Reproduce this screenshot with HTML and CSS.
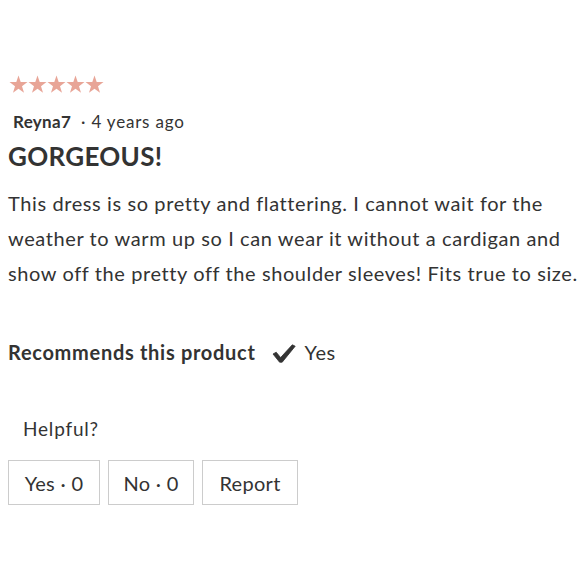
FILE: index.html
```html
<!DOCTYPE html>
<html>
<head>
<meta charset="utf-8">
<link rel="stylesheet" href="styles.css">
</head>
<body>
<div class="review">
  <div class="stars">
    <svg width="95" height="19" viewBox="0 0 95 19">
      <g fill="#e8a597">
        <path id="s" d="M9.5 0.5 L11.7 7 L18.5 7.1 L13 11.2 L15 17.8 L9.5 13.8 L4 17.8 L6 11.2 L0.5 7.1 L7.3 7 Z"/>
        <use href="#s" x="19"/>
        <use href="#s" x="38"/>
        <use href="#s" x="57"/>
        <use href="#s" x="76"/>
      </g>
    </svg>
  </div>
  <div class="meta"><span class="author">Reyna7</span><span class="date">· 4 years ago</span></div>
  <h2 class="title">GORGEOUS!</h2>
  <p class="body">This dress is so pretty and flattering. I cannot wait for the weather to warm up so I can wear it without a cardigan and show off the pretty off the shoulder sleeves! Fits true to size.</p>
  <div class="recommend">
    <span class="rec-label">Recommends this product</span>
    <svg class="check" width="24" height="19" viewBox="0 0 24 19"><path d="M1 10 L4.2 8.2 L8.6 13.6 L20.3 0.8 L23.2 2.2 L10.2 18.2 L7.6 18.2 Z" fill="#333" stroke="#333" stroke-width="0.8" stroke-linejoin="round"/></svg>
    <span class="rec-value">Yes</span>
  </div>
  <div class="helpful">Helpful?</div>
  <div class="actions">
    <button class="btn btn-yes">Yes · 0</button>
    <button class="btn btn-no">No · 0</button>
    <button class="btn btn-report">Report</button>
  </div>
</div>
</body>
</html>
```
FILE: styles.css
```css
html, body {
  margin: 0;
  padding: 0;
  background: #fff;
}
body {
  font-family: Lato, "Noto Sans", sans-serif;
  color: #333;
}
.review {
  padding: 75px 2px 0 8px;
}
.stars {
  height: 19px;
  padding-left: 1px;
}
.stars svg {
  display: block;
}
.meta {
  margin-top: 17px;
  padding-left: 5px;
  font-size: 17px;
  line-height: 22px;
  display: flex;
  gap: 10px;
  align-items: baseline;
}
.author {
  font-weight: 700;
  letter-spacing: 0.3px;
}
.date {
  font-size: 17px;
  letter-spacing: 0.8px;
}
.title {
  margin: 7px 0 0 0;
  font-size: 26px;
  line-height: 32px;
  font-weight: 700;
  letter-spacing: 0.3px;
}
.body {
  margin: 14px 0 0 0;
  font-size: 20px;
  line-height: 35px;
  letter-spacing: 0.6px;
}
.recommend {
  margin-top: 48px;
  display: flex;
  align-items: center;
  font-size: 20px;
  line-height: 26px;
}
.rec-label {
  font-weight: 700;
  letter-spacing: 0.7px;
}
.rec-value {
  letter-spacing: 0.6px;
}
.check {
  margin-left: 16px;
  margin-right: 9px;
  margin-top: 3px;
}
.helpful {
  margin-top: 51px;
  padding-left: 15px;
  font-size: 19px;
  line-height: 26px;
  letter-spacing: 0.8px;
}
.actions {
  margin-top: 18px;
  display: flex;
  gap: 8px;
}
.btn {
  font-family: inherit;
  font-size: 20px;
  color: #333;
  background: #fff;
  border: 1px solid #ccc;
  height: 45px;
  padding: 0 10px;
  letter-spacing: 0.3px;
}
.btn-yes { width: 92px; }
.btn-no { width: 86px; }
.btn-report { width: 96px; }
```
